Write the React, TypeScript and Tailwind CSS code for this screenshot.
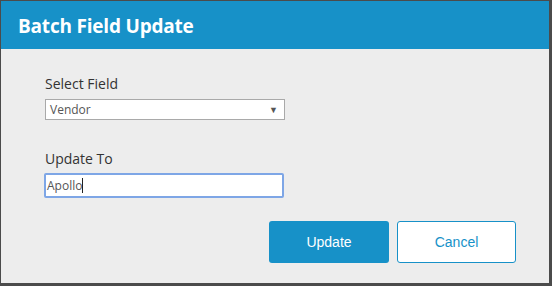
import React from "react";

export default function App() {
  return (
    <div className="w-[552px] h-[286px] overflow-hidden bg-[#4b4b4b] pt-[1px] pl-[1px]">
      <div className="w-[548px] h-[282px] bg-[#ededed] flex flex-col">
        <div className="h-[48px] bg-[#1791c8] flex items-center pl-[17px] pt-[2px]">
          <h1 className="text-white text-[19px] font-bold tracking-[-0.2px] font-['Open_Sans',sans-serif]">
            Batch Field Update
          </h1>
        </div>

        <div className="flex flex-col pl-[44px] pr-[33px] pt-[25px] font-['Open_Sans',sans-serif]">
          <label className="h-[20px] text-[14px] leading-[20px] text-[#333]">
            Select Field
          </label>
          <div className="mt-[5px] w-[240px] h-[21px] bg-white border border-[#a9a9a9] flex items-center justify-between pl-[4px] pr-[6px]">
            <span className="text-[12px] text-[#555]">Vendor</span>
            <span className="text-[9px] text-[#555] leading-none">▼</span>
          </div>

          <label className="mt-[29px] h-[20px] text-[14px] leading-[20px] text-[#333]">
            Update To
          </label>
          <div className="mt-[4px] -ml-[1px] w-[240px] h-[25px] bg-white border-2 border-[#7ea6e6] rounded-[2px] flex items-center pl-[1px]">
            <span className="text-[12px] text-[#555]">Apollo</span>
            <span className="w-[1px] h-[15px] bg-[#222]" />
          </div>

          <div className="mt-[23px] flex justify-end gap-[8px] font-['Liberation_Sans',Arial,sans-serif]">
            <button
              type="button"
              className="w-[120px] h-[42px] rounded-[3px] bg-[#1791c8] text-white text-[14px]"
            >
              Update
            </button>
            <button
              type="button"
              className="w-[119px] h-[42px] rounded-[3px] bg-white border border-[#1791c8] text-[#1791c8] text-[14px]"
            >
              Cancel
            </button>
          </div>
        </div>
      </div>
    </div>
  );
}
